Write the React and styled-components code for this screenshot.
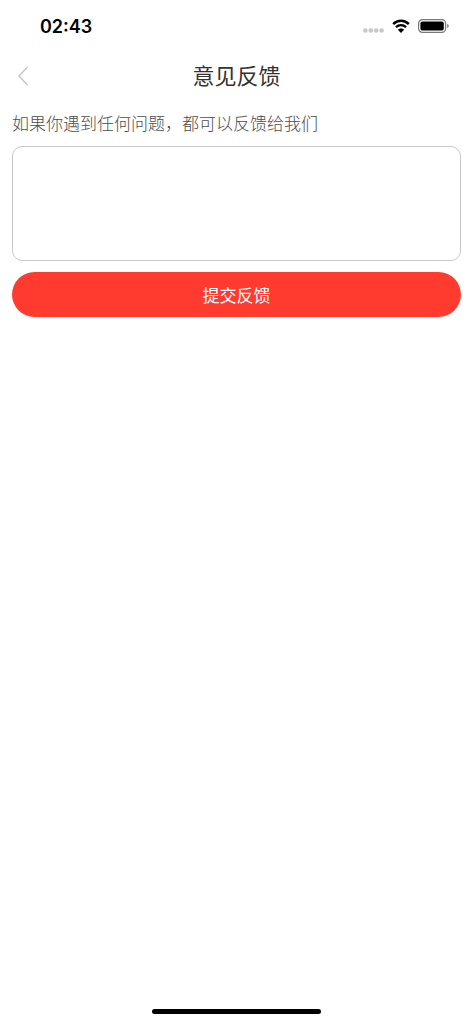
import React from "react";
import styled, { createGlobalStyle } from "styled-components";

const Global = createGlobalStyle`
  html, body { margin: 0; padding: 0; background: #fff; }
  body { font-family: "Inter", "Noto Sans CJK SC", sans-serif; }
`;
const Page = styled.div`
  width: 473px; height: 1024px; display: flex; flex-direction: column; background: #fff; overflow: hidden; position: relative;
`;
const StatusBar = styled.div`
  height: 52px; display: flex; align-items: center; justify-content: space-between; padding: 0 24px 0 40px; box-sizing: border-box;
`;
const Time = styled.span`
  font: 600 18px "Inter", sans-serif; color: #000;
`;
const StatusIcons = styled.div`
  display: flex; align-items: center; gap: 8px;
`;
const Dots = styled.svg`
  margin-top: 9px;
`;
const NavBar = styled.div`
  height: 48px; box-sizing: border-box; padding-bottom: 4px; display: flex; align-items: center; justify-content: center; position: relative;
`;
const Back = styled.svg`
  position: absolute; left: 16px; top: 13px;
`;
const Title = styled.h1`
  margin: 0; font: 400 22px "Noto Sans CJK SC", sans-serif; color: #333;
`;
const Content = styled.div`
  padding: 9px 12px 0; display: flex; flex-direction: column;
`;
const Hint = styled.p`
  margin: 0 0 9px; font: 300 17px/28px "Noto Sans CJK SC", sans-serif; color: #4c4c4c;
`;
const Input = styled.div`
  height: 115px; box-sizing: border-box; border: 1px solid #c8c8c8; border-radius: 10px; background: #fff;
`;
const Submit = styled.button`
  margin-top: 11px; height: 45px; border: 0; border-radius: 23px; background: #ff3b30; color: #fff; font: 400 17px "Noto Sans CJK SC", sans-serif;
`;
const Home = styled.div`
  position: absolute; left: 152px; bottom: 10px; width: 169px; height: 5px; border-radius: 3px; background: #000;
`;
export default function App() {
  return (
    <Page>
      <Global />
      <StatusBar>
        <Time>02:43</Time>
        <StatusIcons>
          <Dots width="21" height="5" viewBox="0 0 21 5"><g fill="#c8c8c8"><circle cx="2.4" cy="2.5" r="2.3"/><circle cx="7.8" cy="2.5" r="2.3"/><circle cx="13.2" cy="2.5" r="2.3"/><circle cx="18.6" cy="2.5" r="2.3"/></g></Dots>
          <svg width="18" height="14" viewBox="0 0 18 14"><g fill="none" stroke="#000" strokeWidth="2.4"><path d="M1.200 5.200C3.200 3.100 6 1.800 9 1.800s5.800 1.300 7.800 3.400"/><path d="M4 8.100c1.300-1.300 3-2 5-2s3.700.7 5 2"/></g><path d="M5.900 10.700C6.700 9.900 7.800 9.400 9 9.400s2.300.5 3.100 1.300L9 14z" fill="#000"/></svg>
          <svg width="31" height="14" viewBox="0 0 31 14"><rect x=".6" y=".6" width="27" height="12.8" rx="3.8" fill="none" stroke="#777" strokeWidth="1.2"/><rect x="2.4" y="2.4" width="23.4" height="9.2" rx="2.2" fill="#000"/><path d="M29.200 5v4c.9-.3 1.500-1.100 1.500-2s-.6-1.700-1.500-2z" fill="#777"/></svg>
        </StatusIcons>
      </StatusBar>
      <NavBar>
        <Back width="14" height="22" viewBox="0 0 14 22"><path d="M11.500 2L3 11l8.500 9" fill="none" stroke="#c9c9d6" strokeWidth="1.7"/></Back>
        <Title>意见反馈</Title>
      </NavBar>
      <Content>
        <Hint>如果你遇到任何问题，都可以反馈给我们</Hint>
        <Input />
        <Submit>提交反馈</Submit>
      </Content>
      <Home />
    </Page>
  );
}
